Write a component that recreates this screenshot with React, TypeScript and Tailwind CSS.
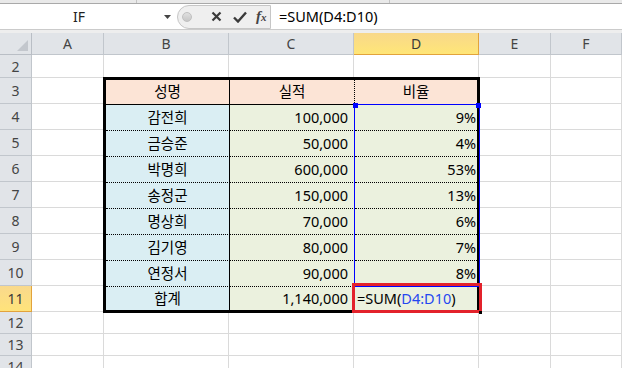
import React from "react"

const people = [
  ["감전희", "100,000", "9%"],
  ["금승준", "50,000", "4%"],
  ["박명희", "600,000", "53%"],
  ["송정군", "150,000", "13%"],
  ["명상희", "70,000", "6%"],
  ["김기영", "80,000", "7%"],
  ["연정서", "90,000", "8%"],
]

const cols = ["A", "B", "C", "D", "E", "F"]
const sheetRows = [2, 3, 4, 5, 6, 7, 8, 9, 10, 11, 12, 13, 14]

const RowHead = ({ n }: { n: number }) => (
  <div
    className={`flex items-center justify-center border-r border-b text-[14px] ${
      n === 11
        ? "bg-gradient-to-b from-[#f9d98c] to-[#ffe37a] border-[#e2a33c] text-[#3a3a3a]"
        : "bg-[#e1e4e8] border-[#c1c6cc] text-[#444]"
    }`}
  >
    {n}
  </div>
)

const Blank = () => <div className="border-r border-b border-[#dadada]" />

const DataTable = () => (
  <div className="[grid-column:3/6] [grid-row:3/12] -m-px relative border-[3px] border-black grid grid-cols-[124px_125px_122px] grid-rows-[25px_repeat(7,26px)_23px] font-['Noto_Sans','Noto_Sans_CJK_KR',sans-serif] text-[14.5px] text-black">
    {/* header */}
    <div className="bg-[#fce4d6] border-r border-b border-black flex items-center justify-center">성명</div>
    <div className="bg-[#fce4d6] border-r border-b border-black [border-right-style:dotted] flex items-center justify-center">
      실적
    </div>
    <div className="bg-[#fce4d6] border-b border-black flex items-center justify-center">비율</div>

    {people.map(([name, amount, pct]) => (
      <React.Fragment key={name}>
        <div className="bg-[#daeef3] border-r border-b border-black [border-bottom-style:dotted] flex items-center justify-center">
          {name}
        </div>
        <div className="bg-[#ebf1de] border-r border-b border-black [border-bottom-style:dotted] flex items-center justify-end pr-[6px]">
          {amount}
        </div>
        <div className="bg-[#ebf1de] border-b border-black border-dotted flex items-center justify-end pr-px">{pct}</div>
      </React.Fragment>
    ))}

    {/* total */}
    <div className="bg-[#daeef3] border-r border-black flex items-center justify-center">합계</div>
    <div className="bg-[#ebf1de] border-r border-black flex items-center justify-end pr-[6px]">1,140,000</div>
    <div className="bg-[#ebf1de] flex items-center pl-[2px] whitespace-nowrap">
      =SUM(<span className="text-[#2447f0]">D4:D10</span>)
    </div>

    {/* range highlight D4:D10 */}
    <div className="absolute left-[248px] top-[24px] w-[126px] h-[183px] border border-[#0000ff] pointer-events-none" />
    <div className="absolute left-[247px] top-[23px] w-[5px] h-[5px] bg-[#0000ff]" />
    <div className="absolute left-[370px] top-[23px] w-[5px] h-[5px] bg-[#0000ff]" />

    {/* red mark on D11 */}
    <div className="absolute left-[246px] top-[203px] w-[130px] h-[30px] border-[3px] border-[#e3222b] pointer-events-none" />
    <div className="absolute left-[373px] top-[231px] w-[3px] h-[3px] bg-black" />
  </div>
)

export default function App() {
  return (
    <div className="w-[622px] h-[368px] overflow-hidden bg-white font-['Noto_Sans',sans-serif]">
      {/* ribbon edge */}
      <div className="h-[3px] bg-[#e9e9e9] flex">
        <div className="w-[137px] border-r border-[#c4c4c4]" />
        <div className="w-[253px] border-r border-[#c4c4c4]" />
      </div>
      <div className="h-px bg-[#a9a9a9]" />

      {/* formula bar */}
      <div className="h-[25px] flex items-center bg-white">
        <div className="w-[158px] text-center text-[14px] text-[#222] leading-none">IF</div>
        <div className="w-[19px] flex justify-center">
          <svg width="7" height="4" viewBox="0 0 7 4">
            <path d="M0 0h7L3.5 4z" fill="#444" />
          </svg>
        </div>
        <div className="w-[94px] h-[24px] rounded-l-full border border-[#c6c6c6] bg-[#efefef] flex items-center">
          <div className="ml-[4px] w-[10px] h-[10px] rounded-full bg-gradient-to-b from-[#e0e0e0] to-[#c6c6c6] border border-[#c0c0c0]" />
          <svg className="ml-[19px]" width="11" height="11" viewBox="0 0 11 11">
            <path d="M1.5 1.5l8 8M9.5 1.5l-8 8" stroke="#3a3a3a" strokeWidth="2.2" />
          </svg>
          <svg className="ml-[11px]" width="14" height="12" viewBox="0 0 14 12">
            <path d="M1 6.5l4 4L13 1.5" stroke="#3a3a3a" strokeWidth="2.4" fill="none" />
          </svg>
          <span className="ml-[9px] font-['Liberation_Serif',serif] italic font-bold text-[15px] text-[#444] leading-none">
            f<span className="text-[11px]">x</span>
          </span>
        </div>
        <div className="pl-[8px] text-[14.5px] text-black leading-none whitespace-nowrap">=SUM(D4:D10)</div>
      </div>
      <div className="h-[4px] border-t border-[#cbcbcb] bg-[#eeeeee]" />

      {/* sheet */}
      <div className="grid grid-cols-[32px_72px_125px_125px_125px_72px_71px] grid-rows-[22px_23px_repeat(9,26px)_repeat(3,22px)]">
        <div className="bg-[#e1e4e8] border-r border-b border-[#b9bec5] flex items-end justify-end p-[3px]">
          <svg width="11" height="11" viewBox="0 0 11 11">
            <path d="M11 0v11H0z" fill="#c3c7cd" />
          </svg>
        </div>
        {cols.map((c) => (
          <div
            key={c}
            className={`flex items-center justify-center border-r border-b text-[14px] ${
              c === "D"
                ? "bg-gradient-to-b from-[#f8d88a] to-[#ffe677] border-[#e2a33c] text-[#3a3a3a]"
                : "bg-[#e1e4e8] border-[#c1c6cc] text-[#444]"
            }`}
          >
            {c}
          </div>
        ))}

        <DataTable />

        {sheetRows.map((n) => (
          <React.Fragment key={n}>
            <RowHead n={n} />
            <Blank />
            {(n < 3 || n > 11) && (
              <>
                <Blank />
                <Blank />
                <Blank />
              </>
            )}
            <Blank />
            <Blank />
          </React.Fragment>
        ))}
      </div>
    </div>
  )
}
